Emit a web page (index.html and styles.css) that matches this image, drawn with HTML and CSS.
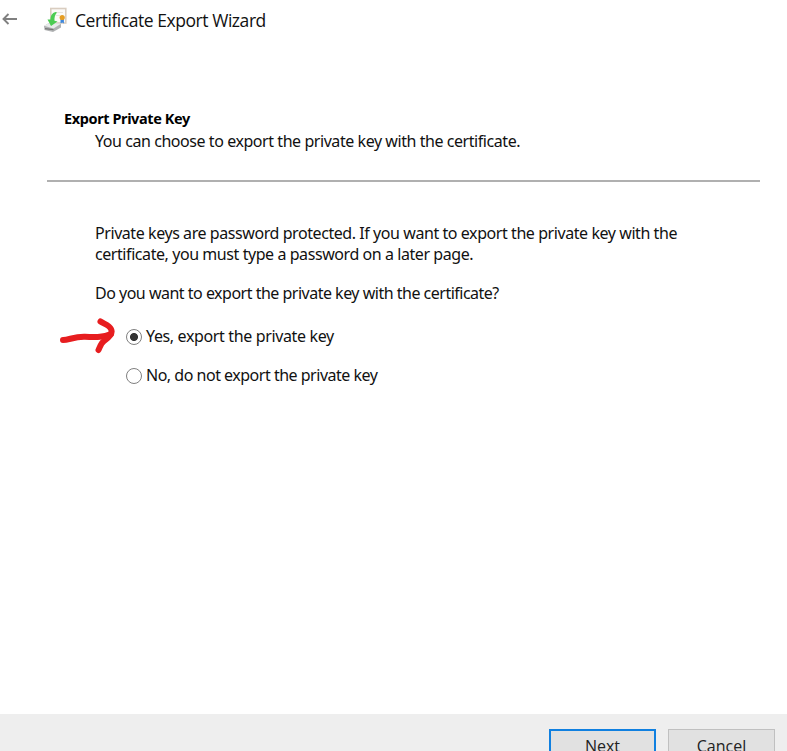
FILE: index.html
```html
<!DOCTYPE html>
<html lang="en">
<head>
    <meta charset="UTF-8">
    <meta name="viewport" content="width=device-width, initial-scale=1.0">
    <title>Certificate Export Wizard</title>
    <link rel="stylesheet" href="styles.css">
</head>
<body>
    <div class="wizard">
        <header class="titlebar">
            <svg class="back" width="16" height="14" viewBox="0 0 16 14">
                <path d="M15 7H1.5M6.5 2L1.5 7L6.5 12" fill="none" stroke="#808080" stroke-width="1.9"/>
            </svg>
            <svg class="logo" width="26" height="26" viewBox="0 0 26 26">
                <!-- Certificate -->
                <rect x="7.8" y="1.5" width="15" height="14.5" fill="#fbfaf7" stroke="#d9cdc0" stroke-width="1.6"/>
                <path d="M12 5.5h8M13 8.5h4" stroke="#e6e4e0"/>
                <path d="M17.5 12v4.5l1.7-1 1.7 1V12z" fill="#3d87dc"/>
                <circle cx="19.2" cy="10.5" r="2.6" fill="#e59d22"/>
                <!-- Drive -->
                <path d="M1 19l5-3 12 1v3.5l-8 4.500L1.5 23z" fill="#b0b2b3"/>
                <path d="M1 18.7l5.5-3 11.5 1-7.5 4.8z" fill="#e8eaea"/>
                <path d="M2 21l8.5 1v1.3L2 22.2z" fill="#777"/>
                <!-- Arrow -->
                <path d="M12.5 5c-3.5 1-5 4-5 7.5L4.5 12.5l3.5 6.5 6.5-4.5-3-.7c-.3-3 .5-6.3 2.5-8.3z" fill="#4bcc52"/>
            </svg>
            <h1>Certificate Export Wizard</h1>
        </header>

        <section class="heading">
            <h2>Export Private Key</h2>
            <p>You can choose to export the private key with the certificate.</p>
        </section>

        <main class="content">
            <p class="info">Private keys are password protected. If you want to export the private key with the<br>certificate, you must type a password on a later page.</p>
            <p class="question">Do you want to export the private key with the certificate?</p>
            <div class="options">
                <label><input type="radio" name="export" checked><span class="yes">Yes, export the private key</span></label>
                <label><input type="radio" name="export"><span class="no">No, do not export the private key</span></label>
                <svg class="pointer" width="58" height="38" viewBox="0 0 58 38">
                    <path d="M5 23C11 23 16 19.5 27 19.8C37 20 43 21 53 17" fill="none" stroke="#e71d1f" stroke-width="6" stroke-linecap="round"/>
                    <path d="M42.5 4.5C46 7 51 8 53 12C55 16 52 20 46 24C43 26 42 30 40.5 33" fill="none" stroke="#e71d1f" stroke-width="6" stroke-linecap="round" stroke-linejoin="round"/>
                </svg>
            </div>
        </main>

        <footer class="actions">
            <button class="next">Next</button>
            <button class="cancel">Cancel</button>
        </footer>
    </div>
</body>
</html>
```

FILE: styles.css
```css
body {
    margin: 0;
    background-color: white;
    color: #111;
    font-family: 'Noto Sans', sans-serif;
    font-size: 16px;
    line-height: 21px;
    overflow: hidden;
}

h1, h2, p {
    margin: 0;
}

.wizard {
    display: flex;
    flex-direction: column;
    height: 776px;
}

.titlebar {
    display: flex;
    align-items: center;
    height: 42px;
    padding-left: 2px;
}

.back {
    margin-top: -5px;
}

.logo {
    margin: -2px 0 0 25px;
}

.titlebar h1 {
    margin: -1px 0 0 6px;
    font-family: 'Open Sans', sans-serif;
    font-size: 17.5px;
    font-weight: normal;
    letter-spacing: -0.45px;
}

/* Page heading */
.heading {
    height: 73px;
    margin: 0 27px 0 47px;
    padding: 65px 0 0 17px;
    border-bottom: 2px solid #b0b0b0;
}

.heading h2 {
    font-size: 14.5px;
    line-height: 22px;
    letter-spacing: -0.4px;
    color: black;
}

.heading p {
    margin: 2px 0 0 31px;
    letter-spacing: -0.44px;
}

.content {
    flex: 1;
    padding: 41px 0 0 95px;
    white-space: nowrap;
    letter-spacing: -0.43px;
}

.question {
    margin-top: 18px;
    letter-spacing: -0.5px;
}

/* Radio options */
.options {
    position: relative;
    display: flex;
    flex-direction: column;
    gap: 18px;
    margin-top: 22px;
    padding-left: 31px;
}

.options label {
    display: flex;
    align-items: center;
}

.options input {
    appearance: none;
    box-sizing: border-box;
    width: 16px;
    height: 16px;
    margin: 0 4px 0 0;
    border: 1px solid #808080;
    border-radius: 50%;
    background-color: white;
}

.options input:checked {
    background-image: radial-gradient(circle, #333 3.6px, transparent 4.4px);
}

.options .yes {
    letter-spacing: -0.36px;
}

.options .no {
    letter-spacing: -0.49px;
}

/* Red arrow drawn over the page */
.pointer {
    position: absolute;
    left: -37px;
    top: -9px;
}

/* Footer */
.actions {
    display: flex;
    justify-content: flex-end;
    align-items: flex-start;
    gap: 12px;
    height: 47px;
    padding: 15px 12px 0 0;
    background-color: #eee;
}

.actions button {
    width: 107px;
    height: 34px;
    padding: 0;
    border: 1px solid #c0c0c0;
    background-color: #e1e1e1;
    color: #222;
    font-family: 'Open Sans', sans-serif;
    font-size: 16px;
}

.actions .next {
    border: 2px solid #1080e0;
}
```
